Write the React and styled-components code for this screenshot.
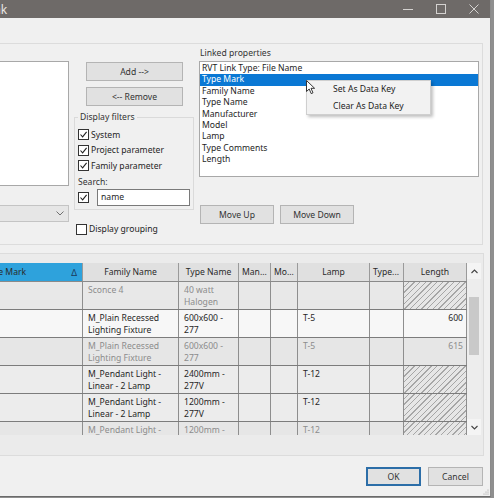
import React from "react";
import styled, { createGlobalStyle } from "styled-components";

const GlobalStyle = createGlobalStyle`
	html, body {
		margin: 0;
		padding: 0;
		background: #8f8f8f;
		overflow: hidden;
	}
	body {
		font-family: "Segoe UI", "Noto Sans", "Open Sans", sans-serif;
		font-size: 8.6px;
		color: #1e1e1e;
	}
	* {
		box-sizing: border-box;
	}
`;

const linked = [
	"RVT Link Type: File Name",
	"Type Mark",
	"Family Name",
	"Type Name",
	"Manufacturer",
	"Model",
	"Lamp",
	"Type Comments",
	"Length",
];

const columns = [
	{ key: "mark", label: "Type Mark", width: 102, align: "left" },
	{ key: "family", label: "Family Name", width: 96 },
	{ key: "type", label: "Type Name", width: 60 },
	{ key: "man", label: "Man...", width: 32, align: "left" },
	{ key: "mo", label: "Mo...", width: 27, align: "left" },
	{ key: "lamp", label: "Lamp", width: 72 },
	{ key: "comments", label: "Type...", width: 34, align: "left" },
	{ key: "length", label: "Length", width: 63 },
];

const rows = [
	{ muted: true, bg: "#e8e8e8", family: ["Sconce 4"], type: ["40 watt", "Halogen"], lamp: "", length: null },
	{ muted: false, bg: "#f7f7f7", family: ["M_Plain Recessed", "Lighting Fixture"], type: ["600x600 -", "277"], lamp: "T-5", length: "600" },
	{ muted: true, bg: "#e6e6e6", family: ["M_Plain Recessed", "Lighting Fixture"], type: ["600x600 -", "277"], lamp: "T-5", length: "615" },
	{ muted: false, bg: "#ececec", family: ["M_Pendant Light -", "Linear - 2 Lamp"], type: ["2400mm -", "277V"], lamp: "T-12", length: null },
	{ muted: false, bg: "#ececec", family: ["M_Pendant Light -", "Linear - 2 Lamp"], type: ["1200mm -", "277V"], lamp: "T-12", length: null },
	{ muted: true, bg: "#e6e6e6", family: ["M_Pendant Light -", "Linear - 2 Lamp"], type: ["1200mm -", "277V"], lamp: "T-12", length: null },
];

const gridTemplate = columns.map((c) => `${c.width}px`).join(" ");

function Check({ checked }) {
	return (
		<CheckBox>
			{checked && (
				<svg width="9" height="9" viewBox="0 0 9 9">
					<path d="M1.5 4.5 L3.6 6.8 L7.6 1.8" fill="none" stroke="#222" strokeWidth="1.1" />
				</svg>
			)}
		</CheckBox>
	);
}

export default function App() {
	return (
		<>
			<GlobalStyle />
			<Window>
				<TitleBar>
					<Title>Link</Title>
					<Controls>
						<ControlButton>
							<svg width="10" height="10" viewBox="0 0 10 10">
								<path d="M0 5.5 H10" stroke="#d4d2d0" strokeWidth="1" />
							</svg>
						</ControlButton>
						<ControlButton>
							<svg width="10" height="10" viewBox="0 0 10 10">
								<rect x="0.5" y="0.5" width="9" height="9" fill="none" stroke="#d4d2d0" />
							</svg>
						</ControlButton>
						<ControlButton>
							<svg width="10" height="10" viewBox="0 0 10 10">
								<path d="M0.5 0.5 L9.5 9.5 M9.5 0.5 L0.5 9.5" stroke="#d4d2d0" strokeWidth="1" />
							</svg>
						</ControlButton>
					</Controls>
				</TitleBar>

				<Body>
					<UpperFrame>
						<LeftColumn>
							<ListBox $height={125} />
							<Dropdown>
								<svg width="8" height="5" viewBox="0 0 8 5">
									<path d="M0.5 0.5 L4 4 L7.5 0.5" fill="none" stroke="#707070" />
								</svg>
							</Dropdown>
						</LeftColumn>

						<MidColumn>
							<WideButton>Add --&gt;</WideButton>
							<WideButton>&lt;-- Remove</WideButton>
							<FilterGroup>
								<legend>Display filters</legend>
								<CheckRow>
									<Check checked />
									System
								</CheckRow>
								<CheckRow>
									<Check checked />
									Project parameter
								</CheckRow>
								<CheckRow>
									<Check checked />
									Family parameter
								</CheckRow>
								<SearchLabel>Search:</SearchLabel>
								<SearchRow>
									<Check checked />
									<SearchInput>name</SearchInput>
								</SearchRow>
							</FilterGroup>
							<GroupingRow>
								<Check />
								Display grouping
							</GroupingRow>
						</MidColumn>

						<RightColumn>
							<FieldLabel>Linked properties</FieldLabel>
							<ListWrap>
								<ListBox $height={116}>
									{linked.map((item, i) => (
										<ListItem key={item} $selected={i === 1}>
											{item}
										</ListItem>
									))}
								</ListBox>
								<ContextMenu>
									<MenuItem>Set As Data Key</MenuItem>
									<MenuItem>Clear As Data Key</MenuItem>
								</ContextMenu>
								<Pointer width="10" height="15" viewBox="0 0 10 15">
									<path
										d="M0.5 0.5 L0.5 11.5 L3.2 9 L5.2 13.6 L7 12.8 L5 8.3 L8.6 8.3 Z"
										fill="#fff"
										stroke="#222"
										strokeWidth="0.9"
									/>
								</Pointer>
							</ListWrap>
							<MoveRow>
								<MoveButton>Move Up</MoveButton>
								<MoveButton>Move Down</MoveButton>
							</MoveRow>
						</RightColumn>
					</UpperFrame>

					<LowerFrame>
						<TableArea>
							<Table>
								<HeaderRow>
									{columns.map((c, i) => (
										<HeaderCell key={c.key} $active={i === 0} $align={c.align}>
											<span>{c.label}</span>
											{i === 0 && <SortMark>Δ</SortMark>}
										</HeaderCell>
									))}
								</HeaderRow>
								<TableBody>
									{rows.map((r, i) => (
										<Row key={i} $bg={r.bg} $muted={r.muted}>
											<Cell />
											<Cell>
												{r.family.map((l) => (
													<div key={l}>{l}</div>
												))}
											</Cell>
											<Cell>
												{r.type.map((l) => (
													<div key={l}>{l}</div>
												))}
											</Cell>
											<Cell />
											<Cell />
											<Cell>{r.lamp}</Cell>
											<Cell />
											<Cell $hatched={!r.length} $align="right">
												{r.length}
											</Cell>
										</Row>
									))}
								</TableBody>
							</Table>
							<ScrollBar>
								<ScrollArrow>
									<svg width="7" height="5" viewBox="0 0 7 5">
										<path d="M0.5 4 L3.5 1 L6.5 4" fill="none" stroke="#444" strokeWidth="1.1" />
									</svg>
								</ScrollArrow>
								<ScrollTrack>
									<ScrollThumb />
								</ScrollTrack>
								<ScrollArrow>
									<svg width="7" height="5" viewBox="0 0 7 5">
										<path d="M0.5 1 L3.5 4 L6.5 1" fill="none" stroke="#444" strokeWidth="1.1" />
									</svg>
								</ScrollArrow>
							</ScrollBar>
						</TableArea>
					</LowerFrame>

					<Footer>
						<DialogButton $primary>OK</DialogButton>
						<DialogButton>Cancel</DialogButton>
					</Footer>
				</Body>
				<Grip width="6" height="6" viewBox="0 0 6 6">
					<circle cx="5" cy="1" r="0.6" fill="#999" />
					<circle cx="3" cy="3" r="0.6" fill="#999" />
					<circle cx="5" cy="3" r="0.6" fill="#999" />
					<circle cx="1" cy="5" r="0.6" fill="#999" />
					<circle cx="3" cy="5" r="0.6" fill="#999" />
					<circle cx="5" cy="5" r="0.6" fill="#999" />
				</Grip>
			</Window>
		</>
	);
}

const Window = styled.div`
	position: relative;
	margin-left: -40px;
	width: 531px;
	height: 497px;
	background: #f0f0f0;
	border-right: 1px solid #8a8a8a;
	border-bottom: 1px solid #6a6a6a;
	overflow: hidden;
`;

const TitleBar = styled.div`
	height: 18px;
	background: #6e6a68;
	display: flex;
	align-items: center;
	justify-content: space-between;
	padding-left: 24px;
`;

const Title = styled.span`
	color: #e8e6e4;
	font-size: 12px;
`;

const Controls = styled.div`
	display: flex;
	height: 100%;
`;

const ControlButton = styled.div`
	width: 33px;
	display: flex;
	align-items: center;
	justify-content: center;
`;

const Body = styled.div`
	padding-top: 25px;
`;

const UpperFrame = styled.div`
	margin-left: 4px;
	width: 519px;
	height: 202px;
	border: 1px solid #dcdcdc;
	padding: 4px 2px 0 7px;
	display: grid;
	grid-template-columns: 97px 120px 280px;
	column-gap: 5px;
	align-items: start;
`;

const LeftColumn = styled.div`
	padding-top: 13px;
	display: flex;
	flex-direction: column;
	gap: 19px;
`;

const ListBox = styled.div`
	height: ${(p) => p.$height}px;
	background: #fff;
	border: 1px solid #a8a8a8;
	padding-top: 1px;
`;

const Dropdown = styled.div`
	height: 17px;
	background: #e6e6e6;
	border: 1px solid #c4c4c4;
	display: flex;
	align-items: center;
	justify-content: flex-end;
	padding-right: 4px;
`;

const MidColumn = styled.div`
	display: flex;
	flex-direction: column;
	padding-top: 14px;
`;

const WideButton = styled.div`
	margin-left: 12px;
	width: 97px;
	height: 19px;
	margin-bottom: 6px;
	background: #e1e1e1;
	border: 1px solid #b4b4b4;
	display: flex;
	align-items: center;
	justify-content: center;
	color: #333;
`;

const FilterGroup = styled.fieldset`
	margin: 0;
	margin-top: -1px;
	min-width: 0;
	height: 99px;
	border: 1px solid #dadada;
	padding: 0 3px 3px 3px;

	legend {
		padding: 0 2px;
		line-height: 12px;
		color: #333;
	}
`;

const CheckRow = styled.div`
	height: 15.5px;
	display: flex;
	align-items: center;
	gap: 2px;
	&:first-of-type {
		margin-top: 4px;
	}
`;

const CheckBox = styled.span`
	flex: none;
	width: 11px;
	height: 11px;
	border: 1px solid #333;
	background: #fff;
	display: inline-flex;
	align-items: center;
	justify-content: center;
`;

const SearchLabel = styled.div`
	height: 14px;
	line-height: 14px;
	margin-top: 1px;
	color: #333;
`;

const SearchRow = styled.div`
	display: flex;
	align-items: center;
	gap: 8px;
`;

const SearchInput = styled.div`
	width: 93px;
	height: 17px;
	background: #fff;
	border: 1px solid #7a7a7a;
	padding-left: 3px;
	line-height: 15px;
`;

const GroupingRow = styled.div`
	margin-top: 13px;
	margin-left: 2px;
	display: flex;
	align-items: center;
	gap: 2px;
`;

const RightColumn = styled.div`
	display: flex;
	flex-direction: column;
`;

const FieldLabel = styled.div`
	height: 13px;
	line-height: 11px;
	padding-left: 1px;
	color: #333;
`;

const ListWrap = styled.div`
	position: relative;
`;

const ListItem = styled.div`
	height: 11.4px;
	line-height: 11.4px;
	padding-left: 2px;
	background: ${(p) => (p.$selected ? "#0a78d4" : "transparent")};
	color: ${(p) => (p.$selected ? "#fff" : "#1e1e1e")};
`;

const ContextMenu = styled.div`
	position: absolute;
	left: 107px;
	top: 19px;
	width: 125px;
	height: 35px;
	background: #f2f2f2;
	border: 1px solid #cfcfcf;
	box-shadow: 2px 2px 3px rgba(0, 0, 0, 0.25);
`;

const MenuItem = styled.div`
	height: 17px;
	line-height: 17px;
	padding-left: 26px;
	color: #222;
`;

const Pointer = styled.svg`
	position: absolute;
	left: 107px;
	top: 19px;
`;

const MoveRow = styled.div`
	margin-top: 28px;
	margin-left: 1px;
	display: flex;
	gap: 6px;
`;

const MoveButton = styled.div`
	width: 74px;
	height: 19px;
	background: #e1e1e1;
	border: 1px solid #b4b4b4;
	display: flex;
	align-items: center;
	justify-content: center;
	color: #333;
`;

const LowerFrame = styled.div`
	margin-top: 8px;
	margin-left: 4px;
	width: 520px;
	height: 203px;
	border: 1px solid #dcdcdc;
	background: #ebebeb;
	padding: 9px 0 0 16px;
`;

const TableArea = styled.div`
	display: flex;
	height: 172px;
`;

const Table = styled.div`
	display: flex;
	flex-direction: column;
	width: 486px;
`;

const HeaderRow = styled.div`
	display: grid;
	grid-template-columns: ${gridTemplate};
	height: 19px;
	background: #e0e0e0;
	border-bottom: 1px solid #8a8a8a;
`;

const HeaderCell = styled.div`
	display: flex;
	align-items: center;
	justify-content: ${(p) => (p.$active ? "space-between" : p.$align === "left" ? "flex-start" : "center")};
	padding: 0 3px;
	border-right: 1px solid #9a9a9a;
	background: ${(p) => (p.$active ? "#2ea2dc" : "transparent")};
	color: #2a2a2a;
	white-space: nowrap;
	overflow: hidden;
`;

const SortMark = styled.span`
	font-size: 9px;
	color: #1a3a5a;
	margin-right: 2px;
`;

const TableBody = styled.div`
	flex: 1;
	overflow: hidden;
`;

const Row = styled.div`
	display: grid;
	grid-template-columns: ${gridTemplate};
	height: 28px;
	background: ${(p) => p.$bg};
	color: ${(p) => (p.$muted ? "#8c8c8c" : "#262626")};
	border-bottom: 1px solid #7c7c7c;
`;

const Cell = styled.div`
	padding: 2px 3px 0 5px;
	line-height: 12px;
	border-right: 1px solid #8e8e8e;
	text-align: ${(p) => p.$align || "left"};
	white-space: nowrap;
	overflow: hidden;
	background: ${(p) =>
		p.$hatched
			? "repeating-linear-gradient(135deg, #e6e6e6 0px, #e6e6e6 3px, #a6a6a6 3px, #a6a6a6 4px)"
			: "transparent"};
`;

const ScrollBar = styled.div`
	width: 14px;
	display: flex;
	flex-direction: column;
	background: #ececec;
`;

const ScrollArrow = styled.div`
	height: 16px;
	display: flex;
	align-items: center;
	justify-content: center;
	background: #f4f4f4;
`;

const ScrollTrack = styled.div`
	flex: 1;
	padding: 18px 2px 0 2px;
	background: #ededed;
`;

const ScrollThumb = styled.div`
	height: 58px;
	background: #c9c9c9;
`;

const Footer = styled.div`
	display: flex;
	justify-content: flex-end;
	gap: 7px;
	padding-right: 7px;
	margin-top: 11px;
`;

const DialogButton = styled.div`
	width: 55px;
	height: 19px;
	display: flex;
	align-items: center;
	justify-content: center;
	background: #e1e1e1;
	border: ${(p) => (p.$primary ? "2px solid #2c6ea8" : "1px solid #b4b4b4")};
	color: #333;
`;

const Grip = styled.svg`
	position: absolute;
	right: 1px;
	bottom: 1px;
`;
